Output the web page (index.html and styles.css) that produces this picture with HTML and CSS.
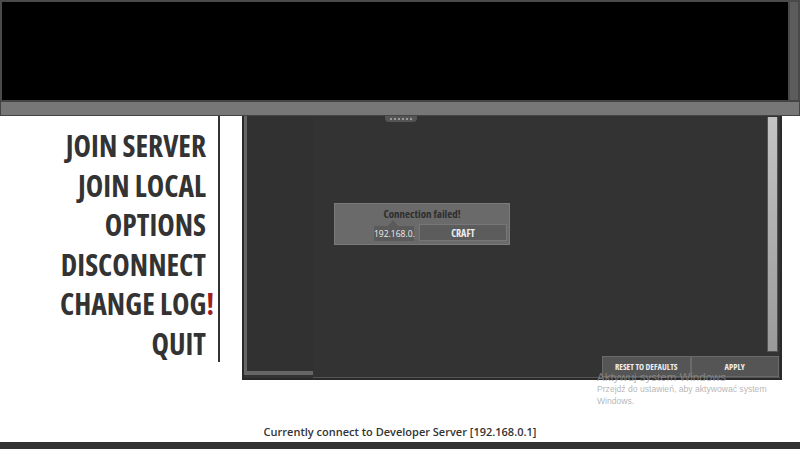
FILE: index.html
```html
<!DOCTYPE html>
<html lang="en">
<head>
  <meta charset="UTF-8" />
  <meta name="viewport" content="width=device-width, initial-scale=1.0"/>
  <title>Main Menu</title>
  <link rel="stylesheet" href="styles.css">
</head>
<body>
  <!-- game viewport + its scroll strip -->
  <div class="viewport">
    <div class="screen"></div>
    <div class="screen-scroll"></div>
  </div>
  <div class="toolbar"></div>

  <div class="main">
    <ul class="menu">
      <li>JOIN SERVER</li>
      <li>JOIN LOCAL</li>
      <li>OPTIONS</li>
      <li>DISCONNECT</li>
      <li>CHANGE LOG<span class="alert">!</span></li>
      <li>QUIT</li>
    </ul>

    <div class="panel">
      <div class="handle"><span></span><span></span><span></span><span></span><span></span><span></span></div>
      <div class="side"></div>
      <div class="stage">
        <div class="area">
          <div class="workspace">
            <div class="dialog">
              <div class="dialog-title">Connection failed!</div>
              <div class="dialog-row">
                <div class="address">192.168.0.</div>
                <div class="craft">CRAFT</div>
              </div>
            </div>
          </div>
          <div class="scrollbar"></div>
        </div>
        <div class="actions">
          <div class="btn">RESET TO DEFAULTS</div>
          <div class="btn">APPLY</div>
        </div>
      </div>
    </div>
  </div>

  <div class="status">Currently connect to Developer Server [192.168.0.1]</div>
  <div class="footer-bar"></div>

  <div class="watermark">
    <div class="wm-title">Aktywuj system Windows</div>
    <div class="wm-text">Przejdź do ustawień, aby aktywować system<br>Windows.</div>
  </div>
</body>
</html>
```

FILE: styles.css
```css
body {
  margin: 0;
  width: 800px;
  height: 449px;
  overflow: hidden;
  background: #fff;
  font-family: "Open Sans", "Noto Sans", sans-serif;
  position: relative;
}

/* Top viewport */
.viewport {
  display: flex;
  height: 100px;
  box-sizing: border-box;
  border: 2px solid #4a4a4a;
  border-right: none;
  border-bottom: none;
  background: #4a4a4a;
}
.screen {
  flex: 1;
  background: #000;
}
.screen-scroll {
  width: 8px;
  margin: 0 2px 0 2px;
  background: #5c5c5c;
}

.toolbar {
  height: 16px;
  box-sizing: border-box;
  background: #777;
  border: 1px solid #444;
  border-top-width: 2px;
}

.main {
  display: flex;
  height: 264px;
}

/* Left menu */
.menu {
  list-style: none;
  margin: 0;
  padding: 10px 12px 0 0;
  width: 206px;
  height: 236px;
  border-right: 2px solid #333;
  text-align: right;
  font-stretch: 75%;
  font-weight: 700;
  font-size: 29.5px;
  line-height: 39.6px;
  color: #333;
}
.menu .alert {
  color: #a01c1c;
  margin-right: -8px;
}

/* Settings panel */
.panel {
  position: relative;
  margin-left: 22px;
  width: 540px;
  box-sizing: border-box;
  border: 2px solid #2a2a2a;
  border-top: none;
  display: flex;
  background: #333;
}
.handle {
  position: absolute;
  left: 141px;
  top: 0;
  width: 32px;
  height: 6px;
  background: #555;
  border-radius: 0 0 4px 4px;
  display: flex;
  justify-content: center;
  align-items: center;
  gap: 2px;
}
.handle span {
  width: 2px;
  height: 2px;
  background: #999;
}
.side {
  width: 66px;
  border-left: 3px solid #666;
  border-bottom: 4px solid #666;
  margin-bottom: 3px;
  background: #313131;
}
.stage {
  flex: 1;
  display: flex;
  flex-direction: column;
  background: #333;
  border-bottom: 1px solid #555;
}
.area {
  flex: 1;
  display: flex;
}
.workspace {
  flex: 1;
  position: relative;
}
.scrollbar {
  width: 9px;
  margin: 1px 2px 0 0;
  background: linear-gradient(#c4c4c4, #9a9a9a);
  border: 1px solid #555;
  border-top: none;
}

.actions {
  display: flex;
  justify-content: flex-end;
  height: 21px;
  margin: 4px 1px 0 0;
}
.btn {
  width: 88.5px;
  box-sizing: border-box;
  background: #555;
  border: 1px solid #6a6a6a;
  color: #eee;
  font-stretch: 75%;
  font-weight: 700;
  font-size: 8.5px;
  display: flex;
  justify-content: center;
  align-items: center;
}

/* Connection dialog */
.dialog {
  position: absolute;
  left: 21px;
  top: 87px;
  width: 176px;
  height: 42px;
  box-sizing: border-box;
  background: #6a6a6a;
  border: 1px solid #7a7a7a;
}
.dialog-title {
  text-align: center;
  font-stretch: 75%;
  font-weight: 700;
  font-size: 11px;
  color: #2e2e2e;
  margin-top: 2px;
  height: 18px;
}
.dialog-row {
  display: flex;
  align-items: flex-end;
  padding-left: 39px;
  gap: 5px;
}
.address {
  position: relative;
  width: 40px;
  height: 15px;
  box-sizing: border-box;
  background: #5a5a5a;
  color: #eee;
  font-size: 8.5px;
  line-height: 15px;
  text-align: center;
  font-stretch: 90%;
}
.address::before {
  content: "";
  position: absolute;
  left: 14px;
  top: -6px;
  border-left: 5px solid transparent;
  border-right: 5px solid transparent;
  border-bottom: 6px solid #5a5a5a;
}
.craft {
  width: 88px;
  height: 17px;
  box-sizing: border-box;
  background: #5c5c5c;
  border: 1px solid #777;
  color: #eee;
  font-stretch: 75%;
  font-weight: 700;
  font-size: 10px;
  display: flex;
  justify-content: center;
  align-items: center;
}

/* Status line */
.status {
  margin-top: 44px;
  text-align: center;
  font-size: 11px;
  font-weight: 600;
  color: #333;
  height: 18px;
}
.footer-bar {
  height: 7px;
  background: #333;
}

/* Activation notice over everything */
.watermark {
  position: absolute;
  left: 597px;
  top: 371px;
  white-space: nowrap;
  font-family: "Liberation Sans", Arial, sans-serif;
  color: rgba(150, 150, 150, 0.7);
}
.wm-title {
  font-size: 11.5px;
  line-height: 12px;
}
.wm-text {
  font-size: 8.6px;
  line-height: 12px;
}
```
